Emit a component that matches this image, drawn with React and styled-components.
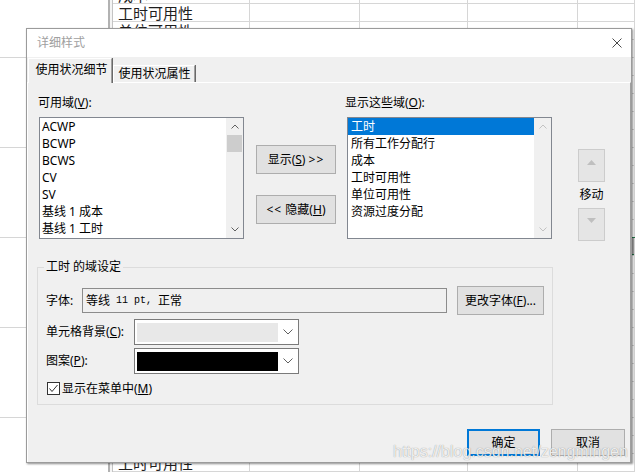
import React from 'react';
import styled, {createGlobalStyle} from 'styled-components';

const GlobalStyle = createGlobalStyle`
  html, body {
    margin: 0;
    padding: 0;
    background: #fff;
    overflow: hidden;
  }
  body {
    font-family: "Noto Sans", "Noto Sans CJK SC", sans-serif;
    font-size: 12px;
  }
`;

/* ---------- sheet behind the dialog ---------- */

const Screen = styled.div`
  position: relative;
  width: 635px;
  height: 472px;
  overflow: hidden;
  display: flex;
`;
const LeftPane = styled.div`
  width: 108px;
  flex: none;
  background: #fff;
`;
const Band = styled.div`
  box-sizing: border-box;
  height: ${p => p.$first ? 58 : 90}px;
  border-bottom: 1px solid #d6d6d6;
`;
const Splitter = styled.div`
  width: 5px;
  flex: none;
  box-sizing: border-box;
  background: #f4f4f4;
  border-left: 2px solid #b2b2b2;
  border-right: 1px solid #c4c4c4;
`;
const Sheet = styled.div`
  flex: 1;
  display: flex;
  flex-direction: column;
  margin-top: -14px;
`;
const SheetRow = styled.div`
  display: grid;
  grid-template-columns: 137px 110px 108px 110px 1fr;
  box-sizing: border-box;
  height: 18px;
  flex: none;
  border-bottom: 1px solid #d6d6d6;
`;
const Cell = styled.div`
  border-right: 1px solid #d6d6d6;
  padding-left: 5px;
  font-family: "Noto Sans CJK SC", sans-serif;
  font-size: 15px;
  line-height: 17px;
  color: #1e1e1e;
  white-space: nowrap;
  overflow: hidden;
  background: ${p => p.$selected ? '#a8a8a8' : 'transparent'};
  box-shadow: ${p => p.$selected ? '0 -1px 0 #217346, inset 0 -1px 0 #217346' : 'none'};
`;

/* ---------- dialog ---------- */

const Dialog = styled.div`
  position: absolute;
  left: 26px;
  top: 28px;
  width: 606px;
  height: 435px;
  box-sizing: border-box;
  border: 1px solid #9b9b9b;
  box-shadow: 1px 1px 2px rgba(0, 0, 0, 0.45);
  display: flex;
  flex-direction: column;
  background: #f0f0f0;
  color: #000;
  font-family: "Noto Sans", "Noto Sans CJK SC", sans-serif;
  font-size: 12px;
`;
const TitleBar = styled.div`
  height: 28px;
  flex: none;
  background: #fff;
  display: flex;
  align-items: center;
  justify-content: space-between;
  padding: 0 9px 0 10px;
  color: #a0a0a0;
  line-height: 16px;
`;
const TabStrip = styled.div`
  height: 25px;
  flex: none;
  display: flex;
  align-items: flex-end;
  padding-left: 1px;
`;
const Tab = styled.div`
  position: relative;
  z-index: ${p => p.$active ? 1 : 0};
  box-sizing: border-box;
  width: ${p => p.$w}px;
  height: ${p => p.$active ? 25 : 17}px;
  margin-bottom: ${p => p.$active ? -1 : 0}px;
  margin-right: 1px;
  padding: ${p => p.$active ? '0 0 3px 3px' : '0 0 0 1px'};
  display: flex;
  align-items: center;
  justify-content: center;
  background: #f0f0f0;
  border-top: 1px solid #fff;
  border-left: 1px solid #fff;
  border-right: 1px solid #a0a0a0;
  box-shadow: 1px 0 0 #696969;
  line-height: 16px;
  white-space: nowrap;
`;
const Panel = styled.div`
  flex: 1;
  display: flex;
  flex-direction: column;
  box-sizing: border-box;
  border-top: 1px solid #fff;
  border-left: 1px solid #fff;
  border-right: 1px solid #a0a0a0;
  padding: 12px 0 0 10px;
`;
const TopRow = styled.div`
  display: flex;
  align-items: flex-start;
`;
const Column = styled.div`
  display: flex;
  flex-direction: column;
  flex: none;
  margin-left: ${p => p.$ml || 0}px;
  padding-top: ${p => p.$pt || 0}px;
  width: ${p => p.$w ? `${p.$w}px` : 'auto'};
`;
const Label = styled.div`
  height: 16px;
  line-height: 16px;
  margin-bottom: 6px;
  white-space: nowrap;
`;
const ListBox = styled.div`
  margin-left: ${p => p.$indent}px;
  width: 205px;
  height: 122px;
  box-sizing: border-box;
  border: 1px solid #828790;
  background: #fff;
  display: flex;
`;
const Items = styled.div`
  flex: 1;
  overflow: hidden;
`;
const Item = styled.div`
  height: 17px;
  line-height: 17px;
  padding-left: ${p => p.$pad}px;
  white-space: nowrap;
  background: ${p => p.$selected ? '#0078d7' : 'transparent'};
  color: ${p => p.$selected ? '#fff' : '#000'};
`;
const ScrollBar = styled.div`
  width: 17px;
  flex: none;
  background: #f0f0f0;
  display: flex;
  flex-direction: column;
`;
const ScrollArrow = styled.div`
  height: 17px;
  flex: none;
  display: flex;
  align-items: center;
  justify-content: center;
`;
const Thumb = styled.div`
  height: 17px;
  margin: 0 1px;
  background: #cdcdcd;
`;
const Track = styled.div`
  flex: 1;
`;
const Button = styled.button`
  box-sizing: border-box;
  width: ${p => p.$w}px;
  height: ${p => p.$h}px;
  margin: 0 0 ${p => p.$mb || 0}px ${p => p.$ml || 0}px;
  padding: 0;
  flex: none;
  border: ${p => p.$default ? '2px solid #0078d7' : '1px solid #adadad'};
  background: #e1e1e1;
  font: inherit;
  line-height: 16px;
  color: #000;
  white-space: nowrap;
`;
const Arrows = styled.span`
  letter-spacing: 1px;
`;
const MoveButton = styled.div`
  box-sizing: border-box;
  width: 27px;
  height: 33px;
  border: 1px solid #cccccc;
  background: #e5e5e5;
  display: flex;
  justify-content: center;
  padding-top: ${p => p.$pt}px;
`;
const MoveLabel = styled.div`
  height: 26px;
  line-height: 26px;
  text-align: center;
  white-space: nowrap;
`;
const Group = styled.div`
  margin: 26px 0 0 -1px;
  width: 516px;
  box-sizing: border-box;
  border: 1px solid #dcdcdc;
  padding: 0 0 9px 8px;
  display: flex;
  flex-direction: column;
`;
const Legend = styled.div`
  width: fit-content;
  margin: -9px 0 0 -2px;
  padding: 0 2px;
  height: 16px;
  line-height: 16px;
  background: #f0f0f0;
`;
const FormRow = styled.div`
  display: flex;
  align-items: center;
  margin-top: ${p => p.$mt}px;
`;
const RowLabel = styled.div`
  width: ${p => p.$w}px;
  flex: none;
  line-height: 16px;
  white-space: nowrap;
`;
const TextBox = styled.div`
  box-sizing: border-box;
  width: 365px;
  height: 25px;
  border: 1px solid #8c8c8c;
  background: #f0f0f0;
  padding-left: 3px;
  display: flex;
  align-items: center;
  line-height: 16px;
  white-space: pre;
`;
const Mono = styled.span`
  font-family: "Liberation Mono", monospace;
  font-size: 10px;
`;
const Combo = styled.div`
  box-sizing: border-box;
  width: 165px;
  height: 26px;
  border: 1px solid #7a7a7a;
  background: #fff;
  padding-left: 2px;
  display: flex;
  align-items: center;
`;
const Swatch = styled.div`
  width: 141px;
  height: 19px;
  background: ${p => p.$color};
`;
const Chevron = styled.div`
  flex: 1;
  display: flex;
  justify-content: center;
`;
const CheckRow = styled.div`
  display: flex;
  align-items: center;
  height: 13px;
  margin-top: 8px;
`;
const CheckBox = styled.div`
  box-sizing: border-box;
  width: 13px;
  height: 13px;
  margin-left: 1px;
  border: 1px solid #333;
  background: #fff;
  display: flex;
`;
const CheckLabel = styled.span`
  margin-left: 2px;
  line-height: 13px;
  white-space: nowrap;
`;
const Footer = styled.div`
  display: flex;
  justify-content: flex-end;
  margin: 24px 5px 0 0;
`;
const Watermark = styled.div`
  position: absolute;
  left: 393px;
  top: 444px;
  font-family: "Liberation Sans", Arial, sans-serif;
  font-size: 16px;
  line-height: 16px;
  color: rgba(255, 255, 255, 0.85);
  text-shadow: 0 0 1px rgba(0, 0, 0, 0.45);
  white-space: nowrap;
`;

const UpChevron = ({color}) => (
  <svg width="8" height="5" viewBox="0 0 8 5">
    <polyline points="0.5,4.5 4,1 7.5,4.5" fill="none" stroke={color} strokeWidth="1" />
  </svg>
);
const DownChevron = ({color, w = 8, h = 5}) => (
  <svg width={w} height={h} viewBox={`0 0 ${w} ${h}`}>
    <polyline points={`0.5,0.5 ${w / 2},${h - 1} ${w - 0.5},0.5`} fill="none" stroke={color} strokeWidth="1" />
  </svg>
);

const available = ['ACWP', 'BCWP', 'BCWS', 'CV', 'SV', '基线 1 成本', '基线 1 工时'];
const shown = ['工时', '所有工作分配行', '成本', '工时可用性', '单位可用性', '资源过度分配'];

const sheetText = {0: '成本', 1: '工时可用性', 2: '单位可用性', 26: '工时可用性'};

const App = () => (
  <Screen>
    <GlobalStyle />
    <LeftPane>
      <Band $first />
      {[0, 1, 2, 3, 4].map(i => <Band key={i} />)}
    </LeftPane>
    <Splitter />
    <Sheet>
      {Array.from({length: 28}, (_, r) => (
        <SheetRow key={r}>
          <Cell>{sheetText[r] || ''}</Cell>
          <Cell />
          <Cell />
          <Cell />
          <Cell $selected={r === 14} />
        </SheetRow>
      ))}
    </Sheet>

    <Dialog>
      <TitleBar>
        <span>详细样式</span>
        <svg width="10" height="10" viewBox="0 0 10 10">
          <path d="M0.5 0.5 L9.5 9.5 M9.5 0.5 L0.5 9.5" stroke="#4a4a4a" strokeWidth="1" />
        </svg>
      </TitleBar>

      <TabStrip>
        <Tab $active $w={84}>使用状况细节</Tab>
        <Tab $w={82}>使用状况属性</Tab>
      </TabStrip>

      <Panel>
        <TopRow>
          <Column>
            <Label>可用域(<u>V</u>):</Label>
            <ListBox $indent={1}>
              <Items>
                {available.map(t => <Item key={t} $pad={2}>{t}</Item>)}
              </Items>
              <ScrollBar>
                <ScrollArrow><UpChevron color="#606060" /></ScrollArrow>
                <Thumb />
                <Track />
                <ScrollArrow><DownChevron color="#606060" /></ScrollArrow>
              </ScrollBar>
            </ListBox>
          </Column>

          <Column $ml={12} $pt={50}>
            <Button $w={80} $h={29} $mb={21}>显示(<u>S</u>) <Arrows>&gt;&gt;</Arrows></Button>
            <Button $w={80} $h={29}><Arrows>&lt;&lt;</Arrows> 隐藏(<u>H</u>)</Button>
          </Column>

          <Column $ml={9}>
            <Label>显示这些域(<u>O</u>):</Label>
            <ListBox $indent={2}>
              <Items>
                {shown.map((t, i) => <Item key={t} $pad={3} $selected={i === 0}>{t}</Item>)}
              </Items>
              <ScrollBar>
                <ScrollArrow><UpChevron color="#c2c2c2" /></ScrollArrow>
                <Track />
                <ScrollArrow><DownChevron color="#c2c2c2" /></ScrollArrow>
              </ScrollBar>
            </ListBox>
          </Column>

          <Column $ml={26} $pt={54} $w={27}>
            <MoveButton $pt={10}>
              <svg width="9" height="5" viewBox="0 0 9 5"><polygon points="0,5 4.5,0 9,5" fill="#bfbfbf" /></svg>
            </MoveButton>
            <MoveLabel>移动</MoveLabel>
            <MoveButton $pt={9}>
              <svg width="9" height="5" viewBox="0 0 9 5"><polygon points="0,0 9,0 4.5,5" fill="#bfbfbf" /></svg>
            </MoveButton>
          </Column>
        </TopRow>

        <Group>
          <Legend>工时 的域设定</Legend>
          <FormRow $mt={11}>
            <RowLabel $w={36}>字体:</RowLabel>
            <TextBox>等线<Mono> 11 pt, </Mono>正常</TextBox>
            <Button $w={87} $h={29} $ml={10}>更改字体(<u>F</u>)...</Button>
          </FormRow>
          <FormRow $mt={4}>
            <RowLabel $w={88}>单元格背景(<u>C</u>):</RowLabel>
            <Combo>
              <Swatch $color="#e8e8e8" />
              <Chevron><DownChevron color="#606060" w={10} h={6} /></Chevron>
            </Combo>
          </FormRow>
          <FormRow $mt={3}>
            <RowLabel $w={88}>图案(<u>P</u>):</RowLabel>
            <Combo>
              <Swatch $color="#000" />
              <Chevron><DownChevron color="#606060" w={10} h={6} /></Chevron>
            </Combo>
          </FormRow>
          <CheckRow>
            <CheckBox>
              <svg width="11" height="11" viewBox="0 0 11 11">
                <polyline points="1.5,5.5 4,8.5 9.5,2" fill="none" stroke="#333" strokeWidth="1" />
              </svg>
            </CheckBox>
            <CheckLabel>显示在菜单中(<u>M</u>)</CheckLabel>
          </CheckRow>
        </Group>

        <Footer>
          <Button $w={73} $h={27} $default>确定</Button>
          <Button $w={74} $h={27} $ml={11}>取消</Button>
        </Footer>
      </Panel>
    </Dialog>

    <Watermark>https://blog.csdn.net/zengmingen</Watermark>
  </Screen>
);

export default App;
